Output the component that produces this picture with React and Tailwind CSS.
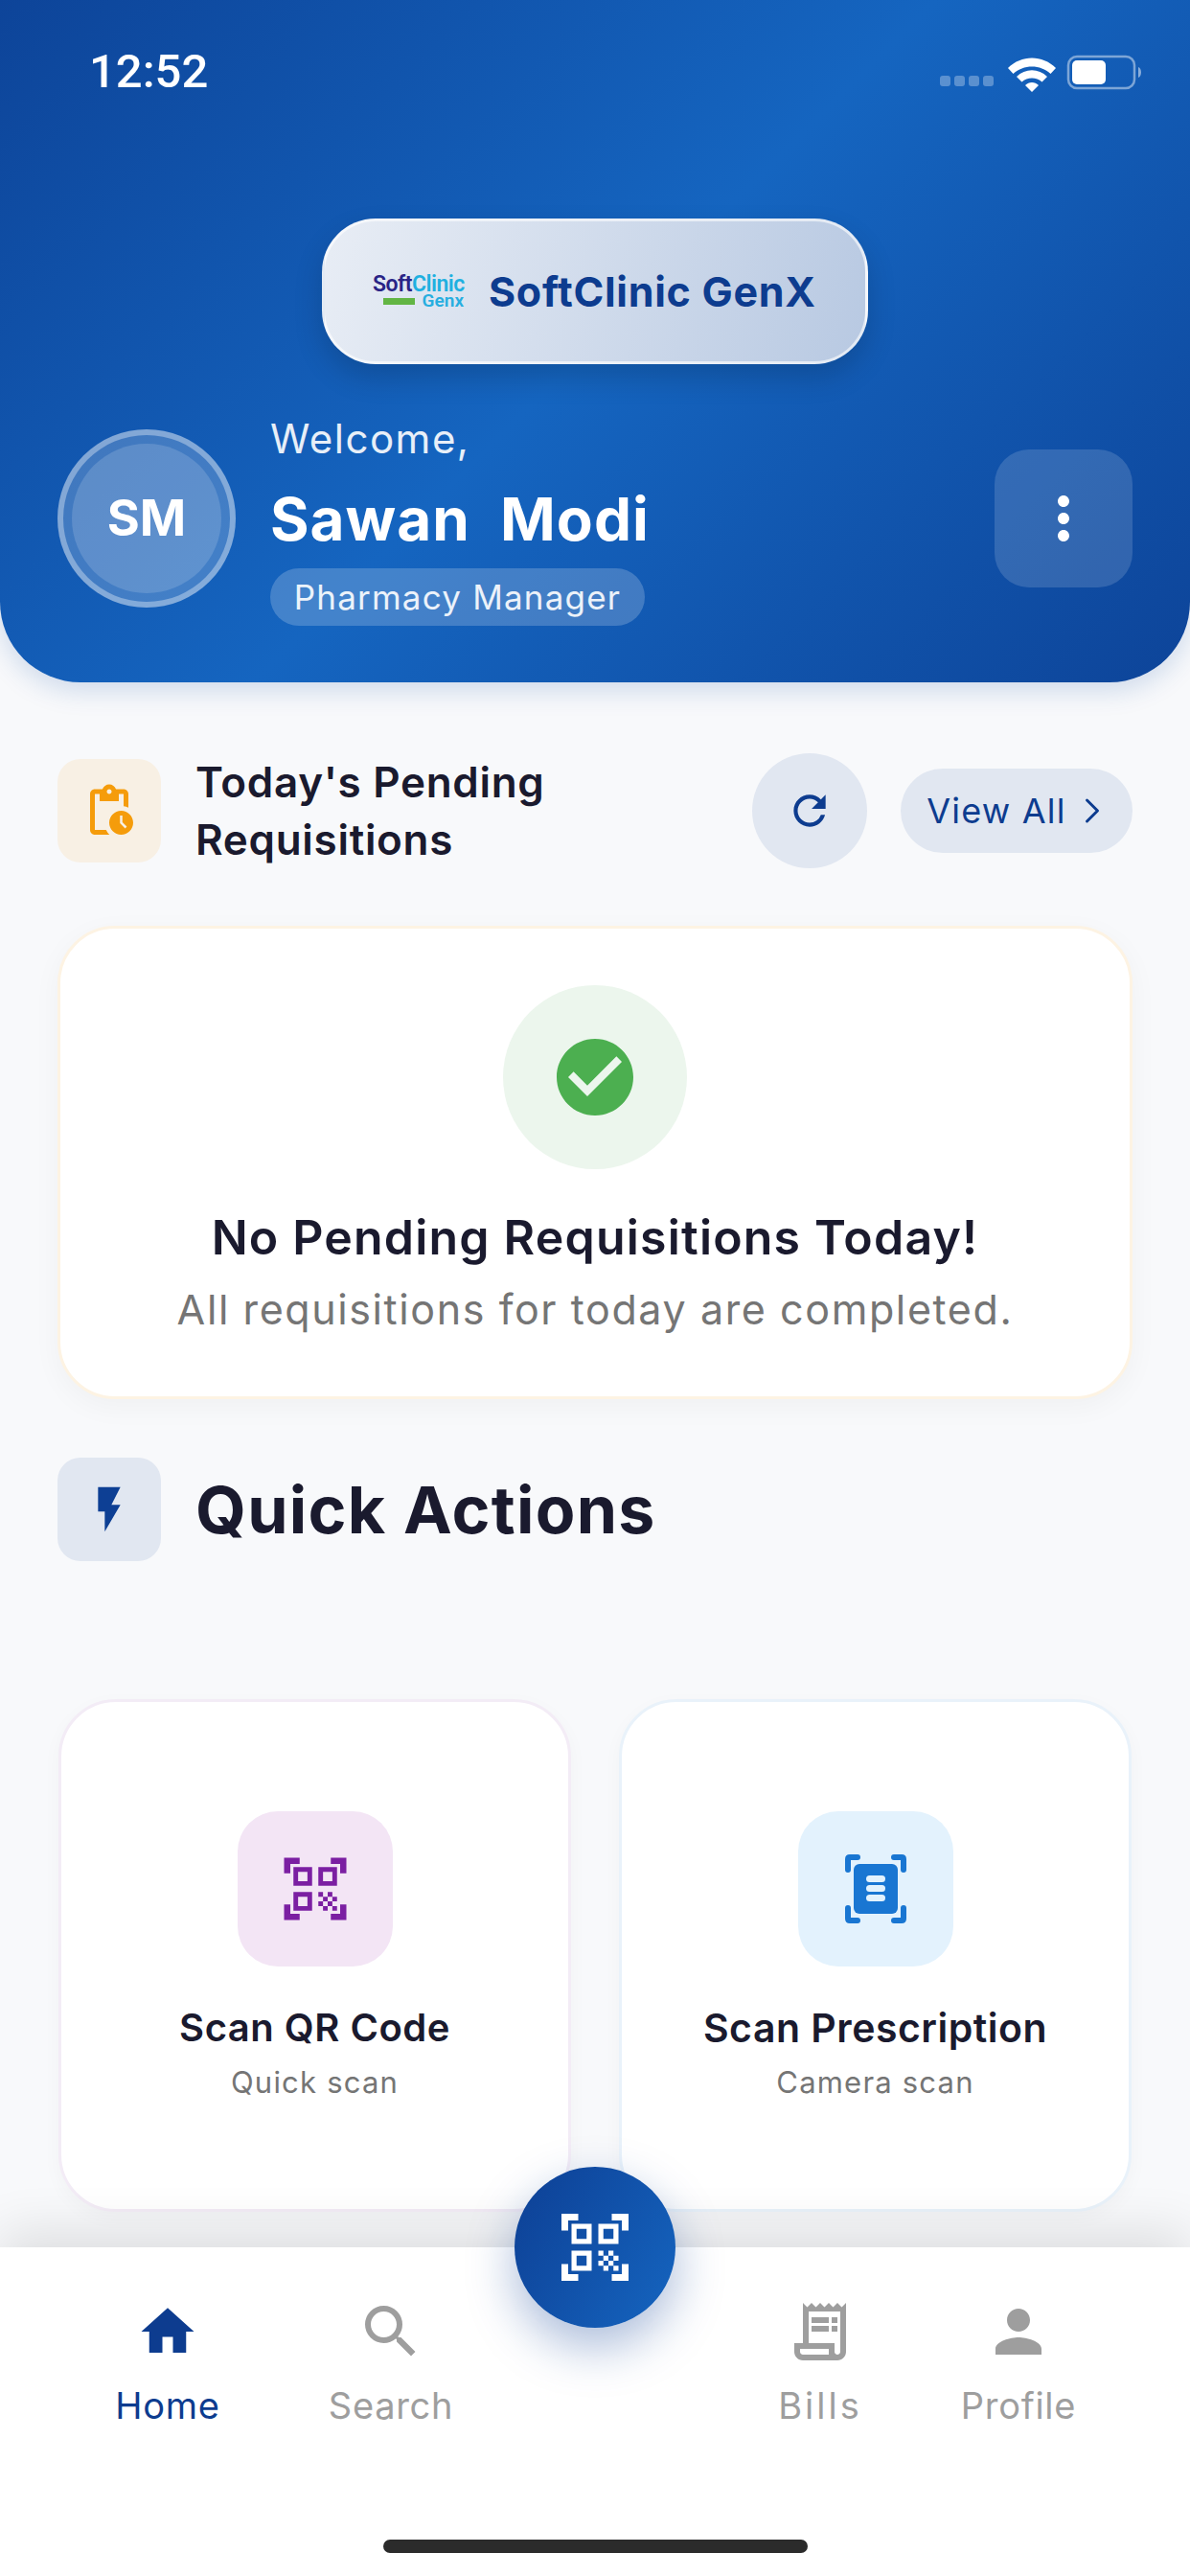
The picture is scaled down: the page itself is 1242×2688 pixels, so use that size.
import {
  MdPendingActions,
  MdRefresh,
  MdCheckCircle,
  MdFlashOn,
  MdQrCodeScanner,
  MdMoreVert,
  MdHome,
  MdSearch,
  MdOutlineReceiptLong,
  MdPerson,
} from "react-icons/md";
import { ChevronRight } from "lucide-react";

function StatusIcons() {
  return (
    <svg width="214" height="40" viewBox="0 0 214 40" className="block">
      {/* signal dots */}
      <g fill="#ffffff" fillOpacity="0.3">
        <rect x="0" y="23" width="11" height="11" rx="3" />
        <rect x="15" y="23" width="11" height="11" rx="3" />
        <rect x="30" y="23" width="11" height="11" rx="3" />
        <rect x="45" y="23" width="11" height="11" rx="3" />
      </g>
      {/* wifi */}
      <path d="M71 15 C85 1 107 1 121 15 L115.500 21 C105 11 87 11 76.500 21 Z" fill="#fff" />
      <path d="M80 24 C89 15 103 15 112 24 L106.500 29.500 C101 24 91 24 85.500 29.500 Z" fill="#fff" />
      <path d="M89 33 C93 29 99 29 103 33 L96 40 Z" fill="#fff" />
      {/* battery */}
      <rect x="134" y="3" width="69" height="33" rx="9" fill="none" stroke="#fff" strokeOpacity="0.45" strokeWidth="2.500" />
      <rect x="138" y="7" width="35" height="25" rx="5" fill="#fff" />
      <path d="M207 14 C211 15 211 24 207 25 Z" fill="#fff" fillOpacity="0.5" />
    </svg>
  );
}

function PrescriptionIcon() {
  return (
    <svg width="64" height="72" viewBox="0 0 64 72" className="block" fill="#1976d2">
      <path d="M0 16 V5 Q0 0 5 0 H13 Q16 0 16 3 Q16 6 13 6 H6 V16 Q6 19 3 19 Q0 19 0 16 Z" />
      <path d="M64 16 V5 Q64 0 59 0 H51 Q48 0 48 3 Q48 6 51 6 H58 V16 Q58 19 61 19 Q64 19 64 16 Z" />
      <path d="M0 56 V67 Q0 72 5 72 H13 Q16 72 16 69 Q16 66 13 66 H6 V56 Q6 53 3 53 Q0 53 0 56 Z" />
      <path d="M64 56 V67 Q64 72 59 72 H51 Q48 72 48 69 Q48 66 51 66 H58 V56 Q58 53 61 53 Q64 53 64 56 Z" />
      <rect x="9" y="10" width="46" height="52" rx="6" />
      <g fill="#e3f2fd">
        <rect x="22" y="22" width="20" height="7" rx="3.500" />
        <rect x="22" y="32" width="20" height="7" rx="3.500" />
        <rect x="22" y="42" width="20" height="7" rx="3.500" />
      </g>
    </svg>
  );
}

function LogoMark() {
  return (
    <div className="w-[96px] relative shrink-0 font-['Roboto',sans-serif]">
      <div className="text-[23px] leading-[20px] font-semibold tracking-[-0.5px] whitespace-nowrap">
        <span className="text-[#2a2486]">Soft</span>
        <span className="text-[#1fb0e0]">Clinic</span>
      </div>
      <div className="flex items-center justify-between pl-[11px] pr-[1px]">
        <div className="w-[33px] h-[7px] bg-[#62b544]" />
        <span className="text-[19px] leading-[14px] font-semibold text-[#27aee0]">Genx</span>
      </div>
    </div>
  );
}

function Header() {
  return (
    <header className="h-[712px] shrink-0 rounded-b-[84px] bg-[linear-gradient(135deg,#0d4499_0%,#1565c0_50%,#0d4499_100%)] shadow-[0_8px_28px_rgba(13,71,161,0.18)] relative z-10">
      <div className="flex items-start justify-between pt-[50px] pl-[93px] pr-[47px] h-[100px]">
        <span className="text-[49px] leading-[50px] text-white font-['Roboto',sans-serif] font-medium">12:52</span>
        <div className="pt-[6px]">
          <StatusIcons />
        </div>
      </div>

      <div className="flex justify-center mt-[128px]">
        <div className="w-[570px] h-[152px] rounded-[56px] border-[3px] border-white/60 bg-[linear-gradient(105deg,#e8edf5_0%,#b8c9e2_100%)] shadow-[0_14px_30px_rgba(0,0,0,0.16)] flex items-center pl-[50px] gap-[25px]">
          <LogoMark />
          <span className="text-[43px] font-bold text-[#0d3c8f] tracking-[0.7px] whitespace-nowrap">SoftClinic GenX</span>
        </div>
      </div>

      <div className="flex items-center px-[60px] mt-[53px]">
        <div className="w-[186px] h-[186px] rounded-full bg-white/20 border-[6px] border-white/35 p-[9px] shrink-0 mt-[-4px]">
          <div className="w-full h-full rounded-full bg-white/15 flex items-center justify-center text-white text-[52px] font-bold">
            SM
          </div>
        </div>
        <div className="ml-[36px] flex-1 flex flex-col items-start">
          <span className="text-[42px] leading-[50px] text-white/90 tracking-[1.5px]">Welcome,</span>
          <span className="text-[62px] leading-[72px] mt-[23px] font-bold text-white tracking-[1px] whitespace-pre">Sawan  Modi</span>
          <span className="mt-[15px] h-[60px] w-[391px] rounded-[30px] bg-white/20 flex items-center justify-center text-[35px] text-white/90 tracking-[1.2px] whitespace-nowrap">
            Pharmacy Manager
          </span>
        </div>
        <div className="w-[144px] h-[144px] rounded-[36px] bg-white/15 flex items-center justify-center shrink-0 mt-[-4px]">
          <MdMoreVert className="w-[72px] h-[72px] text-white" />
        </div>
      </div>
    </header>
  );
}

function ActionCard({ icon, iconBox, title, titleSize, sub, border }) {
  return (
    <div className={`h-[535px] rounded-[60px] bg-white border-[3px] ${border} shadow-[0_6px_20px_rgba(0,0,0,0.03)] flex flex-col items-center pt-[114px]`}>
      <div className={`w-[162px] h-[162px] rounded-[42px] flex items-center justify-center ${iconBox}`}>{icon}</div>
      <div className={`mt-[39px] leading-[50px] font-semibold text-[#1a1a2e] tracking-[0.5px] whitespace-nowrap ${titleSize}`}>{title}</div>
      <div className="mt-[12px] text-[31px] leading-[40px] text-[#757575] tracking-[1.2px]">{sub}</div>
    </div>
  );
}

function NavItem({ icon, label, active, className, labelClass = "tracking-[0.7px]" }) {
  return (
    <div className={`flex flex-col items-center ${className} ${active ? "text-[#0d3c8f]" : "text-[#9e9e9e]"}`}>
      <div className="h-[72px] w-[72px] flex items-center justify-center">{icon}</div>
      <span className={`mt-[16px] text-[38px] leading-[50px] ${labelClass}`}>{label}</span>
    </div>
  );
}

export default function App() {
  return (
    <div className="w-[1242px] h-[2688px] relative flex flex-col overflow-hidden bg-[#f8f9fb] font-['Inter',sans-serif]">
      <Header />

      <main className="flex-1 px-[60px] pt-[74px] min-h-0">
        {/* Pending requisitions */}
        <div className="flex items-center h-[120px]">
          <div className="w-[108px] h-[108px] rounded-[24px] bg-[#f8f0e4] flex items-center justify-center shrink-0">
            <MdPendingActions className="w-[60px] h-[60px] text-[#f59c0b]" />
          </div>
          <div className="ml-[36px] flex-1 text-[44px] leading-[60px] font-semibold text-[#1a1a2e] tracking-[0.7px]">
            Today's Pending
            <br />
            Requisitions
          </div>
          <div className="w-[120px] h-[120px] rounded-full bg-[#e1e7f1] flex items-center justify-center shrink-0">
            <MdRefresh className="w-[50px] h-[50px] text-[#0d3c8f]" />
          </div>
          <div className="ml-[35px] w-[242px] h-[88px] rounded-[44px] bg-[#e1e7f1] flex items-center justify-center text-[36px] text-[#0d3c8f] tracking-[1.2px] whitespace-nowrap">
            View All
            <ChevronRight className="w-[44px] h-[44px] ml-[5px] mr-[-7px]" strokeWidth={1.6} />
          </div>
        </div>

        <div className="mt-[60px] h-[494px] rounded-[60px] bg-white border-[3px] border-[#fdf3e3] shadow-[0_8px_30px_rgba(0,0,0,0.04)] flex flex-col items-center pt-[59px]">
          <div className="w-[192px] h-[192px] rounded-full bg-[#ecf6ed] flex items-center justify-center">
            <MdCheckCircle className="w-[96px] h-[96px] text-[#4caf50]" />
          </div>
          <div className="mt-[41px] text-[50px] leading-[60px] font-semibold text-[#1a1a2e] tracking-[1.2px] whitespace-nowrap">
            No Pending Requisitions Today!
          </div>
          <div className="mt-[20px] text-[43px] leading-[50px] text-[#757575] tracking-[1.6px] whitespace-nowrap">
            All requisitions for today are completed.
          </div>
        </div>

        {/* Quick actions */}
        <div className="mt-[61px] flex items-center h-[108px]">
          <div className="w-[108px] h-[108px] rounded-[24px] bg-[#e1e7f1] flex items-center justify-center shrink-0">
            <MdFlashOn className="w-[56px] h-[56px] text-[#0d3f94]" />
          </div>
          <div className="ml-[36px] text-[68px] font-bold text-[#1a1a2e] tracking-[1.3px]">Quick Actions</div>
        </div>

        <div className="mt-[144px] grid grid-cols-2 gap-[50px] px-[1px]">
          <ActionCard
            icon={<MdQrCodeScanner className="w-[78px] h-[78px] text-[#7b1fa2]" />}
            iconBox="bg-[#f3e5f5]"
            border="border-[#f3ecf6]"
            title="Scan QR Code"
            titleSize="text-[40px]"
            sub="Quick scan"
          />
          <ActionCard
            icon={<PrescriptionIcon />}
            iconBox="bg-[#e3f2fd]"
            border="border-[#e9f2fa]"
            title="Scan Prescription"
            titleSize="text-[41px]"
            sub="Camera scan"
          />
        </div>
      </main>

      {/* Bottom navigation */}
      <nav className="h-[343px] shrink-0 relative z-20 bg-white shadow-[0_-16px_50px_rgba(0,0,0,0.11)]">
        <div className="flex items-start pl-[110px] pt-[52px]">
          <NavItem active className="w-[130px]" label="Home" icon={<MdHome className="w-[66px] h-[66px]" />} />
          <NavItem className="w-[136px] ml-[100px]" label="Search" icon={<MdSearch className="w-[72px] h-[72px]" />} />
          <NavItem className="w-[120px] ml-[320px]" label="Bills" labelClass="tracking-[3px]" icon={<MdOutlineReceiptLong className="w-[72px] h-[72px]" />} />
          <NavItem className="w-[130px] ml-[82px]" label="Profile" icon={<MdPerson className="w-[72px] h-[72px]" />} />
        </div>

        <div className="absolute left-[537px] top-[-84px] w-[168px] h-[168px] rounded-full bg-[linear-gradient(120deg,#0d3f94,#1565c0)] shadow-[0_20px_50px_rgba(13,63,148,0.35)] flex items-center justify-center">
          <MdQrCodeScanner className="w-[84px] h-[84px] text-white" />
        </div>

        <div className="absolute left-[400px] bottom-[24px] w-[443px] h-[14px] rounded-full bg-[#2b2b2b]" />
      </nav>
    </div>
  );
}
